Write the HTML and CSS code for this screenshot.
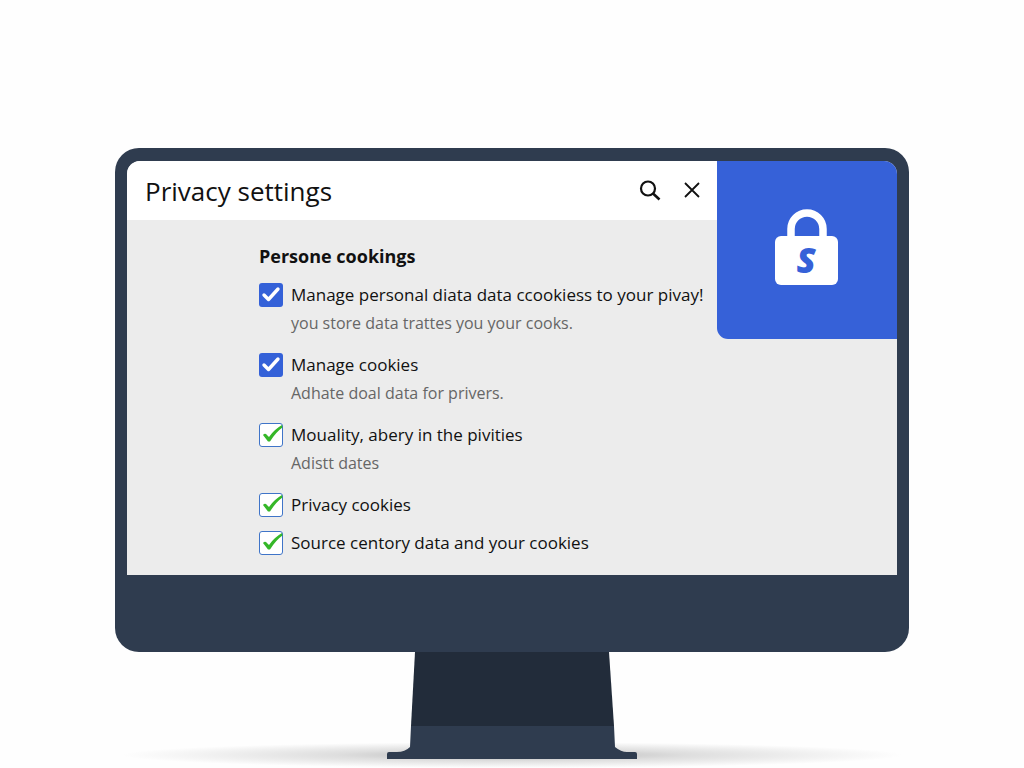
FILE: index.html
```html
<!DOCTYPE html>
<html lang="en">
<head>
  <meta charset="UTF-8">
  <meta name="viewport" content="width=device-width, initial-scale=1.0">
  <title>Privacy settings</title>
  <link rel="stylesheet" href="styles.css">
</head>
<body>

<!-- Check mark shapes -->
<svg class="defs" aria-hidden="true">
  <symbol id="tick" viewBox="0 0 24 24">
    <path d="M5 12 L9.5 16.5 L19 6" fill="none" stroke="#fff" stroke-width="3.4" stroke-linecap="round" stroke-linejoin="round"/>
  </symbol>
  <symbol id="tick-green" viewBox="0 0 24 24">
    <path d="M4 12 Q5.5 10 7 11 L10 14 Q15 6.5 23 2 L23.5 4.5 Q17 9 11 18.5 L9 18.5 Z" fill="#35b728"/>
  </symbol>
</svg>

<main class="monitor">
  <div class="screen">
    <section class="window">
      <header class="titlebar">
        <h1>Privacy settings</h1>
        <button type="button" class="icon-button" aria-label="Search">
          <svg width="22" height="22" viewBox="0 0 22 22" fill="none" stroke="#111" stroke-width="2.2">
            <circle cx="9" cy="8.5" r="7"/>
            <path d="M14 13.5 L20.5 19.5" stroke-width="2.6"/>
          </svg>
        </button>
        <button type="button" class="icon-button" aria-label="Close">
          <svg width="22" height="22" viewBox="0 0 22 22" fill="none" stroke="#111" stroke-width="1.8">
            <path d="M4 3 L18 17 M18 3 L4 17"/>
          </svg>
        </button>
      </header>

      <form class="settings">
        <h2>Persone cookings</h2>

        <div class="option">
          <span class="check">
            <input type="checkbox" id="personal" checked>
            <svg><use href="#tick"/></svg>
          </span>
          <label for="personal">Manage personal diata data ccookiess to your pivay!</label>
          <p class="hint">you store data trattes you your cooks.</p>
        </div>

        <div class="option">
          <span class="check">
            <input type="checkbox" id="manage" checked>
            <svg><use href="#tick"/></svg>
          </span>
          <label for="manage">Manage cookies</label>
          <p class="hint">Adhate doal data for privers.</p>
        </div>

        <div class="option">
          <span class="check outline">
            <input type="checkbox" id="mouality" checked>
            <svg><use href="#tick-green"/></svg>
          </span>
          <label for="mouality">Mouality, abery in the pivities</label>
          <p class="hint">Adistt dates</p>
        </div>

        <div class="option">
          <span class="check outline">
            <input type="checkbox" id="privacy" checked>
            <svg><use href="#tick-green"/></svg>
          </span>
          <label for="privacy">Privacy cookies</label>
        </div>

        <div class="option">
          <span class="check outline">
            <input type="checkbox" id="source" checked>
            <svg><use href="#tick-green"/></svg>
          </span>
          <label for="source">Source centory data and your cookies</label>
        </div>
      </form>
    </section>

    <aside class="lock-panel">
      <svg width="64" height="76" viewBox="0 0 64 76" role="img" aria-label="Padlock">
        <path d="M16 30 V20 A16 16 0 0 1 48 20 V30" fill="none" stroke="#fff" stroke-width="7.5"/>
        <rect x="0" y="27" width="63" height="49" rx="6" fill="#fff"/>
        <text x="31" y="64" text-anchor="middle" class="lock-letter">S</text>
      </svg>
    </aside>
  </div>
</main>

<!-- Monitor foot -->
<div class="stand">
  <svg width="250" height="107" viewBox="0 0 250 107" aria-hidden="true">
    <path d="M28 0 H222 L227 74 H24 Z" fill="#222c3a"/>
    <path d="M24 74 H227 L228 95 Q234 100 240 100 H248 Q250 100 250 102 V107 H0 V102 Q0 100 2 100 H10 Q18 100 23 95 Z" fill="#2f3c4f"/>
  </svg>
</div>

</body>
</html>
```
FILE: styles.css
```css
* { box-sizing: border-box; }

body {
  margin: 0;
  padding-top: 148px;
  background: #fefefe;
  color: #111;
  font-family: "Open Sans", "Noto Sans", sans-serif;
}

h1, h2, p { margin: 0; }

.defs { position: absolute; width: 0; height: 0; }

/* Monitor */
.monitor {
  margin: 0 115px;
  padding: 13px 12px 77px;
  background: #2f3c4f;
  border-radius: 24px;
}

.screen {
  display: grid;
  grid-template-columns: 1fr 180px;
  align-items: start;
  overflow: hidden;
  background: #ececec;
  border-radius: 13px 13px 0 0;
}

/* Title bar */
.titlebar {
  display: flex;
  align-items: center;
  gap: 20px;
  height: 59px;
  padding: 0 14px 0 18px;
  background: #fff;
}

h1 {
  flex: 1;
  font-size: 26px;
  font-weight: 400;
}

.icon-button {
  display: flex;
  padding: 0;
  border: 0;
  background: none;
}

/* Options */
.settings {
  display: flex;
  flex-direction: column;
  gap: 14px;
  padding: 23px 0 20px 132px;
}

h2 {
  font-size: 18px;
  font-weight: 700;
  line-height: 26px;
}

.option {
  display: grid;
  grid-template-columns: 24px 1fr;
  column-gap: 8px;
  row-gap: 4px;
  font-size: 17px;
  line-height: 24px;
  white-space: nowrap;
}

.hint {
  grid-column: 2;
  padding-bottom: 4px;
  color: #666;
  font-size: 16px;
}

.check { display: grid; }

.check input,
.check svg {
  grid-area: 1 / 1;
  width: 24px;
  height: 24px;
  margin: 0;
}

.check svg {
  pointer-events: none;
  visibility: hidden;
}

.check input:checked + svg { visibility: visible; }

.check input {
  appearance: none;
  background: #3461d8;
  border-radius: 3px;
}

.outline input {
  background: #fff;
  border: 1px solid #3f74c8;
}

/* Lock */
.lock-panel {
  display: flex;
  justify-content: center;
  padding: 48px 0 54px;
  background: #3661d8;
  border-radius: 0 0 0 11px;
}

.lock-letter {
  fill: #3661d8;
  font-size: 35px;
  font-style: italic;
  font-weight: 800;
}

/* Stand with its floor shadow */
.stand {
  display: flex;
  justify-content: center;
  height: 116px;
  background: radial-gradient(ellipse 390px 13px at 50% 103px, #b4b4b4, #dedede 45%, #fefefe);
}
```
